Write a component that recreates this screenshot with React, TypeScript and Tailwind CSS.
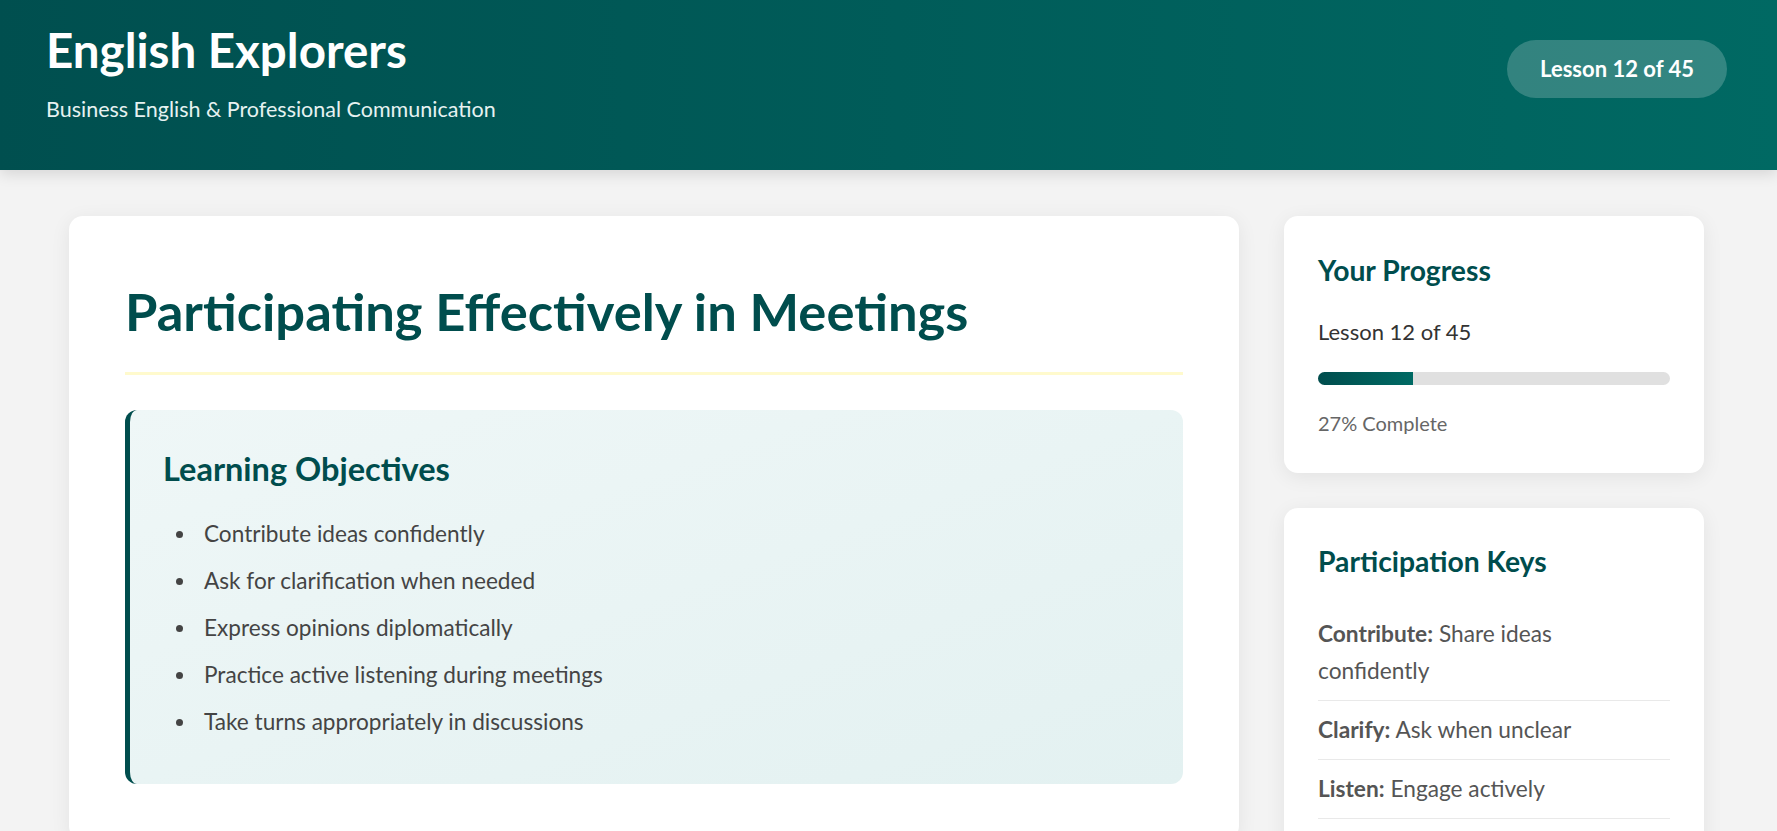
import React from 'react';

const objectives = [
  'Contribute ideas confidently',
  'Ask for clarification when needed',
  'Express opinions diplomatically',
  'Practice active listening during meetings',
  'Take turns appropriately in discussions',
];

const keys = [
  { label: 'Contribute:', text: 'Share ideas confidently' },
  { label: 'Clarify:', text: 'Ask when unclear' },
  { label: 'Listen:', text: 'Engage actively' },
];

const App = () => {
  const progress = 27;

  return (
    <div className="min-h-screen bg-[#f3f3f3] font-[Lato,sans-serif]">
      <header className="relative z-10 h-[170px] flex justify-between items-start pl-[46px] pr-[50px] pt-[22px] bg-linear-to-r from-[#004f4f] to-[#006963] shadow-[0_4px_14px_rgba(0,0,0,0.12)]">
        <div>
          <h1 className="text-[47.5px] leading-[55px] font-bold text-white">English Explorers</h1>
          <p className="mt-[17px] text-[21.5px] leading-[30px] text-[#e6f2f1]">
            Business English &amp; Professional Communication
          </p>
        </div>
        <div className="mt-[18px] rounded-full bg-white/20 px-[33px] py-[15px] text-[22px] leading-[28px] font-bold text-white">
          Lesson 12 of 45
        </div>
      </header>

      <main className="flex items-start gap-[45px] pl-[69px] pr-[73px] pt-[46px] pb-[40px]">
        <article className="flex-1 rounded-[14px] bg-white px-[56px] pt-[64px] pb-[56px] shadow-[0_4px_20px_rgba(0,0,0,0.07)]">
          <h2 className="border-b-[3px] border-[#fffacd] pb-[30px] text-[52.5px] leading-[62px] font-bold text-[#004d4d]">
            Participating Effectively in Meetings
          </h2>

          <section className="mt-[35px] rounded-[12px] border-l-[5px] border-[#004d4d] bg-linear-to-br from-[#eff7f7] to-[#e3f1f1] pl-[33px] pr-[33px] pt-[41px] pb-[44px]">
            <h3 className="text-[32.5px] leading-[36px] font-bold text-[#004d4d]">Learning Objectives</h3>
            <ul className="mt-[28px] pl-[13px] flex flex-col gap-[10px]">
              {objectives.map((item) => (
                <li key={item} className="flex text-[22.6px] leading-[37px] text-[#444]">
                  <span className="mt-[16px] mr-[21px] h-[7px] w-[7px] shrink-0 rounded-full bg-[#444]" />
                  {item}
                </li>
              ))}
            </ul>
          </section>
        </article>

        <aside className="w-[420px] shrink-0 flex flex-col gap-[35px]">
          <div className="rounded-[14px] bg-white px-[34px] pt-[38px] pb-[34px] shadow-[0_4px_20px_rgba(0,0,0,0.07)]">
            <h3 className="text-[28.3px] leading-[32px] font-bold text-[#004d4d]">Your Progress</h3>
            <p className="mt-[27px] text-[22px] leading-[37px] text-[#333]">Lesson 12 of 45</p>
            <div className="mt-[22px] h-[13px] w-full overflow-hidden rounded-full bg-[#e0e0e0]">
              <div
                className="h-full bg-linear-to-r from-[#004d4d] to-[#006a64]"
                style={{ width: `${progress}%` }}
              />
            </div>
            <p className="mt-[23px] text-[20px] leading-[31px] text-[#666]">{progress}% Complete</p>
          </div>

          <div className="rounded-[14px] bg-white px-[34px] pt-[37px] pb-[40px] shadow-[0_4px_20px_rgba(0,0,0,0.07)]">
            <h3 className="text-[28.3px] leading-[32px] font-bold text-[#004d4d]">Participation Keys</h3>
            <ul className="mt-[28px]">
              {keys.map((k) => (
                <li
                  key={k.label}
                  className="border-b border-[#e9e9e9] pt-[10px] pb-[11px] pr-[12px] text-[22.7px] leading-[37px] text-[#555]"
                >
                  <span className="font-bold">{k.label}</span> {k.text}
                </li>
              ))}
            </ul>
          </div>
        </aside>
      </main>
    </div>
  );
};

export default App;
